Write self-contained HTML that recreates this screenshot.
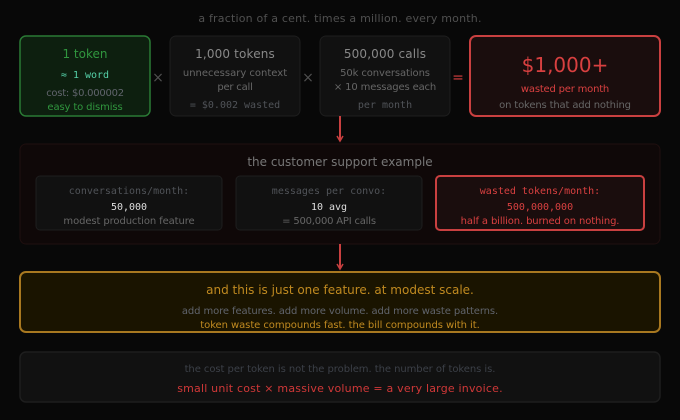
<!DOCTYPE html>
<html><head><meta charset="utf-8"><style>
html,body{margin:0;padding:0;background:#080808;width:680px;height:420px;overflow:hidden;position:relative}
svg{display:block;position:absolute;left:0;top:0}
.t{position:absolute;width:400px;height:14px;line-height:14px;text-align:center;white-space:nowrap;font-family:"DejaVu Sans",sans-serif;font-size:10px}
.m{font-family:"DejaVu Sans Mono",monospace}
.h{font-size:12px}
.w{font-size:11px;letter-spacing:.2px}
</style></head><body>
<svg width="680" height="420" viewBox="0 0 680 420" xmlns="http://www.w3.org/2000/svg">
<rect width="680" height="420" fill="#080808"/>
<rect x="20" y="36" width="130" height="80" rx="6" fill="#0d1f0f" stroke="#2a7a35" stroke-width="1.5"/>
<rect x="170" y="36" width="130" height="80" rx="6" fill="#111" stroke="#1e1e1e" stroke-width="1"/>
<rect x="320" y="36" width="130" height="80" rx="6" fill="#111" stroke="#1e1e1e" stroke-width="1"/>
<rect x="470" y="36" width="190" height="80" rx="6" fill="#1a0d0d" stroke="#c94040" stroke-width="2"/>
<line x1="340" y1="116" x2="340" y2="140" stroke="#c94040" stroke-width="2"/>
<path d="M337 136 L340 141 L343 136" fill="none" stroke="#c94040" stroke-width="1.5"/>
<rect x="20" y="144" width="640" height="100" rx="6" fill="#0f0808" stroke="#1f0f0f" stroke-width="1"/>
<rect x="36" y="176" width="186" height="54" rx="4" fill="#111" stroke="#1e1e1e" stroke-width="1"/>
<rect x="236" y="176" width="186" height="54" rx="4" fill="#111" stroke="#1e1e1e" stroke-width="1"/>
<rect x="436" y="176" width="208" height="54" rx="4" fill="#1a0d0d" stroke="#c94040" stroke-width="2"/>
<line x1="340" y1="244" x2="340" y2="268" stroke="#c94040" stroke-width="2"/>
<path d="M337 264 L340 269 L343 264" fill="none" stroke="#c94040" stroke-width="1.5"/>
<rect x="20" y="272" width="640" height="60" rx="6" fill="#1a1400" stroke="#a87820" stroke-width="2"/>
<rect x="20" y="352" width="640" height="50" rx="6" fill="#111" stroke="#1e1e1e" stroke-width="1.5"/>
</svg>

<div class="t w" style="left:140px;top:12px;color:#505050">a fraction of a cent. times a million. every month.</div>

<div class="t h" style="left:-115px;top:47px;color:#30963e">1 token</div>
<div class="t m" style="left:-115px;top:69px;color:#55d0a8">≈ 1 word</div>
<div class="t" style="left:-115px;top:87px;color:#60646c;letter-spacing:-.25px">cost: $0.000002</div>
<div class="t" style="left:-115px;top:101px;color:#30963e;letter-spacing:-.13px">easy to dismiss</div>
<div class="t h" style="left:-42px;top:71px;color:#505050;font-size:14px">×</div>

<div class="t h" style="left:35px;top:47px;color:#888;letter-spacing:.15px">1,000 tokens</div>
<div class="t" style="left:35px;top:67px;color:#666">unnecessary context</div>
<div class="t" style="left:35px;top:81px;color:#666;letter-spacing:-.2px">per call</div>
<div class="t m" style="left:35px;top:99px;color:#505358">= $0.002 wasted</div>
<div class="t h" style="left:108px;top:71px;color:#505050;font-size:14px">×</div>

<div class="t h" style="left:185px;top:47px;color:#888;letter-spacing:.15px">500,000 calls</div>
<div class="t" style="left:185px;top:67px;color:#666;letter-spacing:-.1px">50k conversations</div>
<div class="t" style="left:185px;top:81px;color:#666;letter-spacing:-.15px">× 10 messages each</div>
<div class="t m" style="left:185px;top:99px;color:#505358">per month</div>
<div class="t h" style="left:258px;top:71px;color:#d84040;font-size:14px">=</div>

<div class="t" style="left:365px;top:58px;color:#d84040;font-size:20px">$1,000+</div>
<div class="t" style="left:365px;top:83px;color:#d84040;letter-spacing:-.2px">wasted per month</div>
<div class="t" style="left:365px;top:99px;color:#666;letter-spacing:-.15px">on tokens that add nothing</div>

<div class="t h" style="left:140px;top:155px;color:#777">the customer support example</div>

<div class="t m" style="left:-71px;top:185px;color:#505358">conversations/month:</div>
<div class="t m" style="left:-71px;top:201px;color:#ddd">50,000</div>
<div class="t" style="left:-71px;top:215px;color:#666;letter-spacing:-.1px">modest production feature</div>

<div class="t m" style="left:129px;top:185px;color:#505358">messages per convo:</div>
<div class="t m" style="left:129px;top:201px;color:#ddd">10 avg</div>
<div class="t" style="left:129px;top:215px;color:#666;letter-spacing:-.2px">= 500,000 API calls</div>

<div class="t m" style="left:340px;top:185px;color:#d84040">wasted tokens/month:</div>
<div class="t m" style="left:340px;top:201px;color:#d84040">500,000,000</div>
<div class="t" style="left:340px;top:215px;color:#d84040;letter-spacing:-.13px">half a billion. burned on nothing.</div>

<div class="t h" style="left:140px;top:283px;color:#c08a20">and this is just one feature. at modest scale.</div>
<div class="t" style="left:140px;top:305px;color:#60646c;letter-spacing:-.1px">add more features. add more volume. add more waste patterns.</div>
<div class="t" style="left:140px;top:319px;color:#c08a20;letter-spacing:-.07px">token waste compounds fast. the bill compounds with it.</div>

<div class="t" style="left:140px;top:363px;color:#3c4048;letter-spacing:-.06px">the cost per token is not the problem. the number of tokens is.</div>
<div class="t w" style="left:140px;top:382px;color:#d03838">small unit cost × massive volume = a very large invoice.</div>
</body></html>
